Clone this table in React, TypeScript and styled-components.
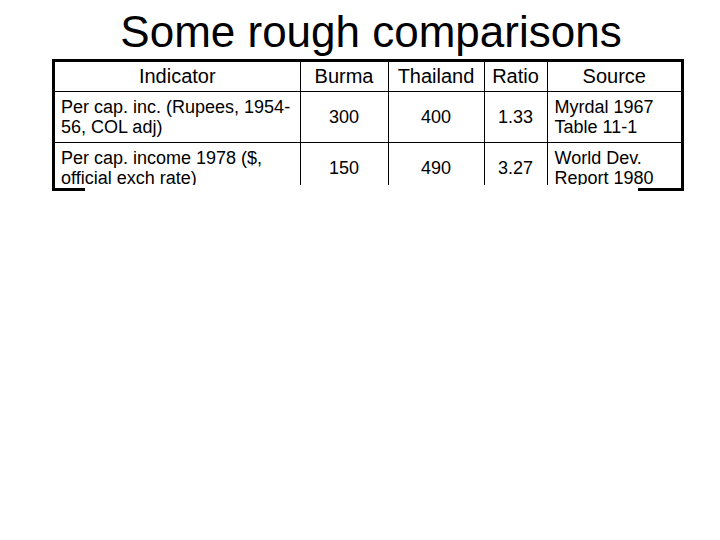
import React from "react";
import styled, { createGlobalStyle } from "styled-components";

const Global = createGlobalStyle`
  html, body { margin: 0; padding: 0; background: #fff; }
  body { font-family: "Liberation Sans", Arial, sans-serif; color: #000; }
`;

const Page = styled.div`
  width: 720px;
  height: 540px;
  background: #fff;
  overflow: hidden;
`;

const Title = styled.h1`
  margin: 0;
  height: 59px;
  box-sizing: border-box;
  padding: 10px 0 0 22px;
  font-size: 44px;
  line-height: 44px;
  font-weight: normal;
  text-align: center;
  white-space: nowrap;
`;

const Frame = styled.div`
  margin-left: 52px;
  width: 632px;
  box-sizing: border-box;
  border: 3px solid #000;
  border-bottom: none;
  display: flex;
  flex-direction: column;
`;

const Clip = styled.div`
  height: 123px;
  overflow: hidden;
`;

const BottomEdge = styled.div`
  margin-top: 3px;
  height: 3px;
  display: flex;
  justify-content: space-between;
`;

const Segment = styled.div<{ $w: number }>`
  width: ${(p) => p.$w}px;
  height: 3px;
  background: #000;
`;

const Table = styled.table`
  border-collapse: collapse;
  border-style: hidden;
  table-layout: fixed;
  width: 626px;
  font-size: 18px;
  line-height: 20px;
`;

const Col = styled.col<{ $w: number }>`
  width: ${(p) => p.$w}px;
`;

const HeadRow = styled.tr`
  height: 29px;
`;

const BodyRow = styled.tr`
  height: 51px;
`;

const Th = styled.th`
  border: 1px solid #000;
  font-weight: normal;
  font-size: 20px;
  text-align: center;
  vertical-align: middle;
  padding: 0;
  white-space: nowrap;
`;

const Td = styled.td<{ $align?: "left" | "center"; $pad?: number }>`
  border: 1px solid #000;
  text-align: ${(p) => p.$align ?? "center"};
  vertical-align: middle;
  padding: 0 0 0 ${(p) => p.$pad ?? 0}px;
`;

const rows = [
  {
    ind: ["Per cap. inc. (Rupees, 1954-", "56, COL adj)"],
    burma: "300",
    thai: "400",
    ratio: "1.33",
    src: ["Myrdal 1967", "Table 11-1"],
  },
  {
    ind: ["Per cap. income 1978 ($,", "official exch rate)"],
    burma: "150",
    thai: "490",
    ratio: "3.27",
    src: ["World Dev.", "Report 1980"],
  },
];

export default function App() {
  return (
    <Page>
      <Global />
      <Title>Some rough comparisons</Title>
      <Frame>
        <Clip>
          <Table>
            <colgroup>
              <Col $w={245} />
              <Col $w={88} />
              <Col $w={96} />
              <Col $w={63} />
              <Col $w={134} />
            </colgroup>
            <thead>
              <HeadRow>
                <Th>Indicator</Th>
                <Th>Burma</Th>
                <Th>Thailand</Th>
                <Th>Ratio</Th>
                <Th>Source</Th>
              </HeadRow>
            </thead>
            <tbody>
              {rows.map((r, i) => (
                <BodyRow key={i}>
                  <Td $align="left" $pad={6}>
                    {r.ind[0]}
                    <br />
                    {r.ind[1]}
                  </Td>
                  <Td>{r.burma}</Td>
                  <Td>{r.thai}</Td>
                  <Td>{r.ratio}</Td>
                  <Td $align="left" $pad={7}>
                    {r.src[0]}
                    <br />
                    {r.src[1]}
                  </Td>
                </BodyRow>
              ))}
            </tbody>
          </Table>
        </Clip>
        <BottomEdge>
          <Segment $w={30} />
          <Segment $w={43} />
        </BottomEdge>
      </Frame>
    </Page>
  );
}
